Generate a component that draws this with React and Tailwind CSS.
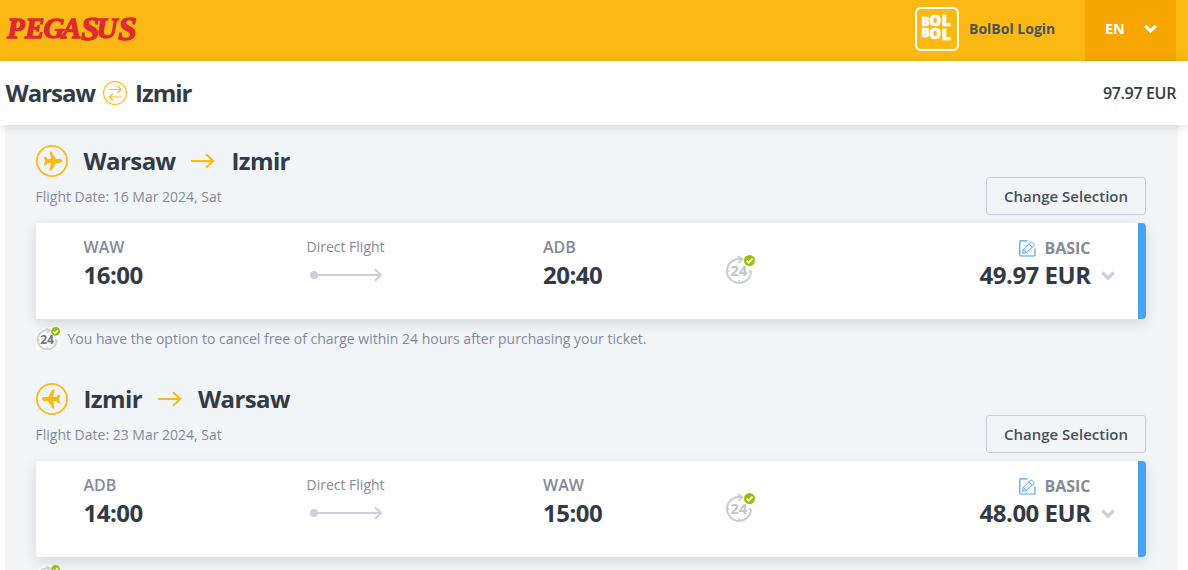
import { useState } from "react";

const flights = [
    {
        id: 1,
        from: "Warsaw",
        to: "Izmir",
        date: "16 Mar 2024, Sat",
        depCode: "WAW",
        depTime: "16:00",
        arrCode: "ADB",
        arrTime: "20:40",
        price: "49.97 EUR",
        inbound: false
    },
    {
        id: 2,
        from: "Izmir",
        to: "Warsaw",
        date: "23 Mar 2024, Sat",
        depCode: "ADB",
        depTime: "14:00",
        arrCode: "WAW",
        arrTime: "15:00",
        price: "48.00 EUR",
        inbound: true
    }
];

function PegasusLogo() {
    return (
        <svg width="140" height="57" viewBox="0 0 140 57">
            <text
                y="38"
                fontFamily="Liberation Serif, serif"
                fontSize="29"
                fontWeight="700"
                fontStyle="italic"
                fill="#e0282e"
                stroke="#e0282e"
                strokeWidth="1.3"
            >
                <tspan x="7">P</tspan>
                <tspan x="25">E</tspan>
                <tspan x="43.5">G</tspan>
                <tspan x="62">A</tspan>
                <tspan x="81" y="39.8" fontSize="33">S</tspan>
                <tspan x="96.5" y="38.4">U</tspan>
                <tspan x="118" y="39.8" fontSize="34">S</tspan>
            </text>
        </svg>
    );
}

function BolBolLogo() {
    return (
        <svg width="44" height="44" viewBox="0 0 44 44">
            <rect x="1" y="1" width="42" height="42" rx="5" fill="none" stroke="#fff" strokeWidth="2" />
            <g fontFamily="Open Sans, sans-serif" fontWeight="800" fill="#fff" stroke="#fff" strokeWidth="0.5" strokeLinejoin="round">
                <text fontSize="12">
                    <tspan x="6.4" y="18.8">B</tspan>
                    <tspan x="14.2" y="19.4" fontSize="15">O</tspan>
                    <tspan x="26.6" y="19.4" fontSize="16.5">L</tspan>
                </text>
                <text fontSize="12">
                    <tspan x="6.4" y="29.8">B</tspan>
                    <tspan x="14.2" y="32.4" fontSize="15">O</tspan>
                    <tspan x="26.6" y="33.4" fontSize="16.5">L</tspan>
                </text>
            </g>
        </svg>
    );
}

function SwapIcon() {
    return (
        <svg width="24" height="24" viewBox="0 0 24 24" fill="none" stroke="#fdb913" strokeWidth="1.2">
            <circle cx="12" cy="12" r="11.4" />
            <path d="M6 8.5H18M14.5 5L18 8.5L14.5 12M18.5 16H6.5M10 12.5L6.5 16L10 19.5" />
        </svg>
    );
}

function PlaneIcon({ inbound }) {
    return (
        <svg width="32" height="32" viewBox="0 0 32 32" className={inbound ? "-scale-x-100" : ""}>
            <circle cx="16" cy="16" r="15.1" fill="none" stroke="#fdb913" strokeWidth="1.8" />
            <path
                d="M26.2 16C26.2 14.7 25 14.1 23.4 14.1H19.9L16 7.2Q15.6 6.5 14.8 6.5H13.4L15 14.1H11.6L9.8 11.8H7.8L9 16L7.8 20.2H9.8L11.6 17.9H15L13.4 25.5H14.8Q15.6 25.5 16 24.8L19.9 17.9H23.4C25 17.9 26.2 17.3 26.2 16Z"
                fill="#fdb913"
            />
        </svg>
    );
}

function RouteArrow() {
    return (
        <svg width="24" height="16" viewBox="0 0 24 16" fill="none" stroke="#fdb913" strokeWidth="2">
            <path d="M0 8H22.5M15 1.2L22.3 8L15 14.8" />
        </svg>
    );
}

function FlightLine() {
    return (
        <svg width="74" height="14" viewBox="0 0 74 14" fill="none" stroke="#cbd0dc" strokeWidth="2">
            <circle cx="4" cy="7" r="4" fill="#cbd0dc" stroke="none" />
            <path d="M4 7H71M65 1.3L71 7L65 12.7" />
        </svg>
    );
}

function Cancel24Icon({ size = 30, color = "#cbcccd", textColor = "#c4c5c6" }) {
    return (
        <svg width={size} height={size} viewBox="0 0 30 30">
            <path d="M16.5 4.2A12 12 0 1 0 26 16" fill="none" stroke={color} strokeWidth="2" />
            <path d="M12.5 1L17.5 4.2L13.3 8" fill="none" stroke={color} strokeWidth="1.8" />
            <path d="M2 16H4.5M14 27V25M23.5 16H26" stroke={color} strokeWidth="1.5" />
            <text x="5.2" y="21" fontFamily="Open Sans, sans-serif" fontWeight="700" fontSize="15" fill={textColor}>24</text>
            <circle cx="24.5" cy="5.5" r="5.5" fill="#97bf0d" />
            <path d="M21.6 5.6L23.8 7.7L27.5 3.7" fill="none" stroke="#fff" strokeWidth="1.8" />
        </svg>
    );
}

function EditIcon() {
    return (
        <svg width="17" height="17" viewBox="0 0 17 17" fill="none" stroke="#46a3f3" strokeWidth="1">
            <path d="M8.5 0.8H1.5Q0.8 0.8 0.8 1.5V15.3Q0.8 16 1.5 16H15.3Q16 16 16 15.3V8.5" strokeWidth="1.2" />
            <path d="M3.6 13.3L4.4 9.4L11.5 2.2Q12.1 1.6 12.7 2.2L14.9 4.4Q15.5 5 14.9 5.6L7.6 12.7L3.6 13.3ZM9.9 3.9L13.1 7.2M4.4 9.4L7.6 12.7" />
        </svg>
    );
}

function Chevron({ color, width }) {
    return (
        <svg width={width} height="10" viewBox="0 0 14 10" fill="none" stroke={color} strokeWidth="3.4">
            <path d="M1.3 1.5L7 7.2L12.7 1.5" />
        </svg>
    );
}

function Header() {
    return (
        <header className="flex h-[61px] bg-[#fdb913]">
            <PegasusLogo />
            <div className="ml-auto flex h-[58px] items-center gap-[10px]">
                <BolBolLogo />
                <span className="w-[86px] whitespace-nowrap text-sm font-bold text-[#4c525b]">BolBol Login</span>
            </div>
            <button className="mr-3 ml-[30px] flex h-full w-[91px] items-center bg-[#f7a600] pb-[3px] pl-5 text-white">
                <span className="w-[39px] text-left text-[14.5px] font-bold">EN</span>
                <Chevron color="#fff" width={13} />
            </button>
        </header>
    );
}

function FlightCard({ flight }) {
    const [open, setOpen] = useState(false);

    return (
        <section className="h-[238px]">
            <div className="flex h-8 items-center">
                <PlaneIcon inbound={flight.inbound} />
                <h2 className="ml-[15.5px] flex items-center gap-4 text-2xl font-bold tracking-[-0.6px] text-[#323a47]">
                    {flight.from}
                    <RouteArrow />
                    {flight.to}
                </h2>
            </div>
            <div className="flex h-[46px] justify-between">
                <p className="-ml-[0.5px] pt-[10px] text-sm text-[#848a9b]">Flight Date: {flight.date}</p>
                <button className="h-[38px] w-40 rounded-[3px] border border-[#c8cdda] text-[15px] font-semibold text-[#47505c]">
                    Change Selection
                </button>
            </div>

            <div className="flex h-24 rounded-l-xs rounded-r border-r-8 border-[#46a3f3] bg-white pl-[47.5px] shadow-[0_4px_14px_rgba(0,0,0,0.12)]">
                <div className="w-[223px] pt-3">
                    <div className="text-base leading-6 font-semibold text-[#848a9b]">{flight.depCode}</div>
                    <div className="text-2xl leading-8 font-bold tracking-[-0.5px] text-[#323a47]">{flight.depTime}</div>
                </div>
                <div className="w-[236.5px] pt-3">
                    <div className="text-sm leading-6 text-[#848a9b]">Direct Flight</div>
                    <div className="mt-[9px] pl-[3px]">
                        <FlightLine />
                    </div>
                </div>
                <div className="w-[182px] pt-3">
                    <div className="text-base leading-6 font-semibold text-[#848a9b]">{flight.arrCode}</div>
                    <div className="text-2xl leading-8 font-bold tracking-[-0.5px] text-[#323a47]">{flight.arrTime}</div>
                </div>
                <div className="pt-8">
                    <Cancel24Icon />
                </div>
                <div className="ml-auto flex pt-[13px] pr-[23.5px]">
                    <div className="text-right">
                        <div className="flex items-center justify-end gap-2 text-base leading-6 font-bold text-[#848a9b]">
                            <EditIcon />
                            BASIC
                        </div>
                        <div className="-mt-px text-2xl leading-8 font-bold tracking-[-0.5px] text-[#323a47]">{flight.price}</div>
                    </div>
                    <button className="ml-[10px] self-start pt-[35px]" onClick={() => setOpen(!open)}>
                        <Chevron color="#ccd0dd" width={14} />
                    </button>
                </div>
            </div>

            <div className="mt-2 flex h-6 items-center gap-[7.5px] text-sm text-[#848a9b]">
                <span className="flex size-6 items-center justify-center rounded-t-full bg-[#fafafa]">
                    <Cancel24Icon size={24} color="#cdcdcd" textColor="#777" />
                </span>
                You have the option to cancel free of charge within 24 hours after purchasing your ticket.
            </div>
        </section>
    );
}

export default function App() {
    return (
        <div className="h-[570px] overflow-hidden bg-white font-['Open_Sans',sans-serif]">
            <Header />

            <div className="relative z-10 flex h-16 items-center justify-between bg-white pr-3 pl-[5.5px] shadow-[0_2px_10px_rgba(0,0,0,0.12)]">
                <h1 className="flex items-center gap-2 text-2xl font-bold tracking-[-1px] text-[#323a47]">
                    Warsaw
                    <SwapIcon />
                    Izmir
                </h1>
                <span className="text-base font-semibold tracking-[-0.35px] text-[#323a47]">97.97 EUR</span>
            </div>

            <main className="mr-[10px] ml-[5px] bg-[#f1f5f8] pt-5 pr-8 pl-[31px] shadow-[0_0_6px_rgba(0,0,0,0.04)]">
                {flights.map((flight) => (
                    <FlightCard key={flight.id} flight={flight} />
                ))}
            </main>
        </div>
    );
}
